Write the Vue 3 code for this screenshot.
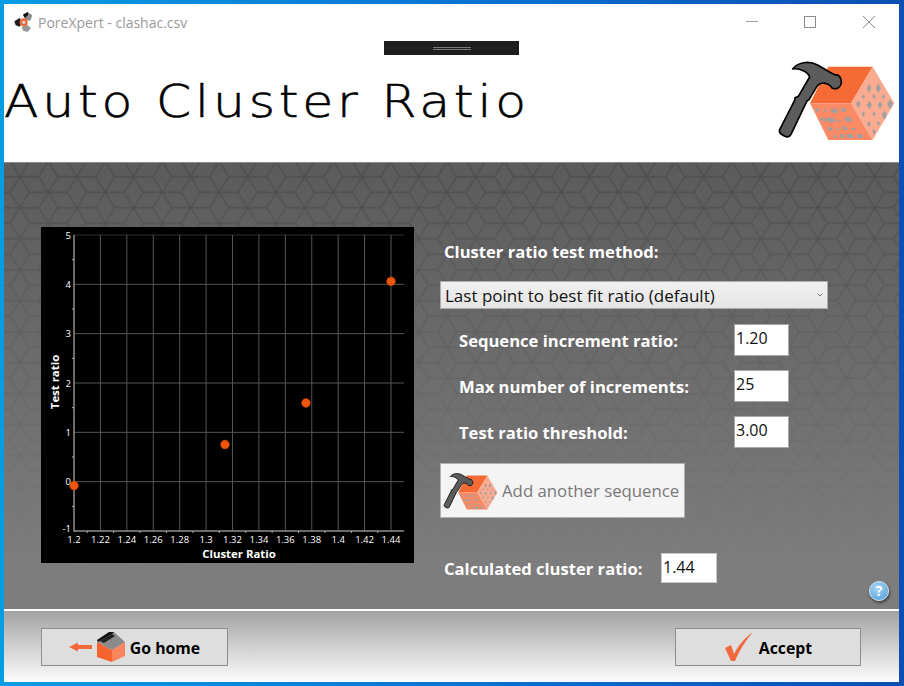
<script setup>
const PLOT = { left: 33, right: 350, top: 8, bottom: 304 }

const xTicks = [1.2, 1.22, 1.24, 1.26, 1.28, 1.3, 1.32, 1.34, 1.36, 1.38, 1.4, 1.42, 1.44]
const yTicks = [5, 4, 3, 2, 1, 0, -1]
const points = [
  { x: 1.2, y: -0.08 },
  { x: 1.3143, y: 0.753 },
  { x: 1.3756, y: 1.595 },
  { x: 1.44, y: 4.06 },
]

function sx(v) {
  return PLOT.left + ((v - 1.2) / 0.24) * (PLOT.right - PLOT.left)
}
function sy(v) {
  return PLOT.bottom - ((v + 1) / 6) * (PLOT.bottom - PLOT.top)
}

const rows = [
  { label: 'Sequence increment ratio:', value: '1.20' },
  { label: 'Max number of increments:', value: '25' },
  { label: 'Test ratio threshold:', value: '3.00' },
]

// holes on the cube faces, in logo coordinates
const sideHoles = [
  [282, 100, 7, 13], [310, 100, 8, 15], [265, 125, 5, 7], [297, 125, 5, 8], [325, 125, 5, 8],
  [250, 147, 7, 11], [283, 150, 8, 13], [315, 150, 7, 11], [345, 147, 9, 15],
  [265, 177, 5, 9], [297, 177, 5, 8], [328, 180, 8, 14], [282, 207, 6, 10], [310, 205, 5, 7], [297, 230, 5, 9],
]
const faceHoles = [
  [127, 165, 8, 4], [150, 167, 6, 3], [178, 167, 12, 6], [205, 165, 9, 5],
  [145, 193, 10, 5], [168, 195, 13, 7], [192, 197, 6, 3], [220, 193, 12, 7],
  [165, 222, 8, 5], [187, 223, 5, 3], [210, 220, 9, 5], [236, 222, 6, 3],
  [180, 245, 6, 4], [202, 243, 8, 5], [226, 243, 12, 6], [255, 243, 10, 6],
]

function diamond([x, y, w, h]) {
  return `${x - w},${y} ${x},${y - h} ${x + w},${y} ${x},${y + h}`
}
function slanted([x, y, w, h]) {
  return `${x - w},${y - h} ${x + w * 0.6},${y - h} ${x + w},${y + h} ${x - w * 0.6},${y + h}`
}
</script>

<template>
  <div class="frame">
    <svg class="defs" width="0" height="0">
      <symbol id="brand" viewBox="0 0 375 270">
        <polygon points="160,35 293,35 228,145 105,145" fill="#f56a35" />
        <polygon points="293,35 358,145 293,255 228,145" fill="#fbab90" />
        <polygon points="105,145 228,145 293,255 160,255" fill="#fa8a66" />
        <polygon v-for="(h, i) in sideHoles" :key="'s' + i" :points="diamond(h)" fill="#a19f9f" />
        <polygon v-for="(h, i) in faceHoles" :key="'f' + i" :points="slanted(h)" fill="#a19f9f" />
        <path
          d="M53 42 C68 22 100 16 128 30 C146 40 162 52 182 60 C192 58 200 70 199 84 C197 98 184 104 172 100 C168 92 158 86 146 84 C136 84 130 88 126 94 L102 134 L96 138 L48 238 C44 246 36 247 28 243 L18 237 C12 232 12 226 16 220 L60 134 L60 128 L70 124 L104 66 C100 52 74 38 53 42 Z"
          fill="#5c5c5c" stroke="#000" stroke-width="5" stroke-linejoin="round"
        />
      </symbol>
    </svg>

    <div class="window">
      <header class="head">
        <div class="titlebar">
          <svg class="app-icon" width="20" height="20" viewBox="0 0 60 60">
            <polygon points="4,28 20,18 28,30 20,44 8,40" fill="#1c1c1c" />
            <polygon points="30,8 44,0 58,10 52,26 38,24" fill="#8e8e8e" />
            <polygon points="30,8 44,0 46,8 36,18" fill="#111" />
            <polygon points="26,44 42,38 54,48 44,60 30,56" fill="#9a9a9a" />
            <circle cx="32" cy="31" r="12" fill="#f0683a" />
            <circle cx="32" cy="31" r="5" fill="#cfd8dc" />
          </svg>
          <span class="app-title">PoreXpert - clashac.csv</span>
          <div class="win-btns">
            <div class="win-btn">
              <svg width="14" height="14" viewBox="0 0 14 14"><path d="M1 6.5H13" stroke="#9a9a9a" fill="none" /></svg>
            </div>
            <div class="win-btn">
              <svg width="14" height="14" viewBox="0 0 14 14"><rect x="1.5" y="1.5" width="11" height="11" stroke="#8c8c8c" fill="none" /></svg>
            </div>
            <div class="win-btn">
              <svg width="14" height="14" viewBox="0 0 14 14"><path d="M1 1L13 13M13 1L1 13" stroke="#8c8c8c" fill="none" /></svg>
            </div>
          </div>
        </div>
        <div class="grip-row"><div class="grip"><span></span></div></div>
        <div class="title-row">
          <h1 class="page-title">Auto Cluster Ratio</h1>
          <svg class="brand-logo" width="125" height="90"><use href="#brand" /></svg>
        </div>
      </header>

      <main class="content">
        <svg class="hex-bg" width="100%" height="100%">
          <defs>
            <pattern id="hexes" x="15.7" y="13.7" width="57" height="31" patternUnits="userSpaceOnUse">
              <path
                d="M0 0H19M38 0H57M0 31H19M38 31H57M9.5 15.5H47.5M0 0L9.5 15.5L0 31M57 0L47.5 15.5L57 31M19 0L28.5 15.5L19 31M38 0L28.5 15.5L38 31"
                stroke="#4b4b4b" stroke-width="1.3" fill="none"
              />
            </pattern>
            <linearGradient id="fade" x1="0" y1="0" x2="0" y2="1">
              <stop offset="0" stop-color="#808080" stop-opacity="0" />
              <stop offset="0.9" stop-color="#808080" stop-opacity="0.92" />
            </linearGradient>
          </defs>
          <rect width="100%" height="100%" fill="#5b5b5b" />
          <rect width="100%" height="100%" fill="url(#hexes)" />
          <rect width="100%" height="100%" fill="url(#fade)" />
        </svg>

        <svg class="chart" width="373" height="336" viewBox="0 0 373 336">
          <rect width="373" height="336" fill="#000" />
          <line v-for="t in yTicks" :key="'gy' + t" :x1="PLOT.left" :x2="PLOT.right + 13" :y1="sy(t)" :y2="sy(t)" :stroke="t === 5 ? '#2e2e2e' : '#555'" />
          <line v-for="t in xTicks" :key="'gx' + t" :x1="sx(t)" :x2="sx(t)" :y1="PLOT.top" :y2="PLOT.bottom" stroke="#555" />
          <line :x1="PLOT.left" :x2="PLOT.left" :y1="PLOT.top" :y2="PLOT.bottom + 1" stroke="#aaa" />
          <line :x1="PLOT.left" :x2="PLOT.right + 13" :y1="PLOT.bottom" :y2="PLOT.bottom" stroke="#aaa" />
          <line v-for="t in yTicks.slice(0, 6)" :key="'my' + t" :x1="PLOT.left - 2" :x2="PLOT.left" :y1="sy(t - 0.5)" :y2="sy(t - 0.5)" stroke="#aaa" />
          <line v-for="t in xTicks.slice(0, 12)" :key="'mx' + t" :x1="sx(t + 0.01)" :x2="sx(t + 0.01)" :y1="PLOT.bottom" :y2="PLOT.bottom + 2" stroke="#aaa" />
          <text v-for="t in yTicks" :key="'ly' + t" class="tick" :x="PLOT.left - 3" :y="sy(t) + (t === -1 ? 1 : 3.5)" text-anchor="end">{{ t }}</text>
          <text v-for="t in xTicks" :key="'lx' + t" class="tick" :x="sx(t)" y="316" text-anchor="middle">{{ parseFloat(t.toFixed(2)) }}</text>
          <text class="axis-label" x="198" y="331" text-anchor="middle">Cluster Ratio</text>
          <text class="axis-label" x="18" y="155" text-anchor="middle" transform="rotate(-90 18 155)">Test ratio</text>
          <circle v-for="(p, i) in points" :key="i" :cx="sx(p.x)" :cy="sy(p.y)" r="4.4" fill="#f25408" stroke="#a8400f" stroke-width="0.6" />
        </svg>

        <section class="controls">
          <div class="label method-label">Cluster ratio test method:</div>
          <div class="select">
            <span>Last point to best fit ratio (default)</span>
            <svg width="6" height="4" viewBox="0 0 6 4"><path d="M0.5 0.5L3 3L5.5 0.5" stroke="#777" fill="none" /></svg>
          </div>
          <div v-for="row in rows" :key="row.label" class="param-row">
            <div class="label param-label">{{ row.label }}</div>
            <div class="field">{{ row.value }}</div>
          </div>
          <button class="add-btn" type="button">
            <svg width="58" height="42"><use href="#brand" /></svg>
            <span>Add another sequence</span>
          </button>
          <div class="result-row">
            <div class="label result-label">Calculated cluster ratio:</div>
            <div class="field result-field">1.44</div>
          </div>
        </section>

        <div class="help">?</div>
      </main>

      <footer class="foot">
        <button class="foot-btn" type="button">
          <svg width="23" height="10" viewBox="0 0 23 10"><path d="M0 5L9 0.5V3H23V7H9V9.5Z" fill="#f4673a" /></svg>
          <svg class="home-icon" width="28" height="30" viewBox="0 0 28 30">
            <polygon points="0,10 15,18 15,30 0,25" fill="#f5642f" />
            <polygon points="15,18 28,10 28,24 15,30" fill="#fa855c" />
            <polygon points="0,10 17,0 28,10 15,18" fill="#8b8b8b" />
            <polygon points="1,10 15,2 17,0 12,0 0,8" fill="#111" />
            <polygon points="3,9 15,2 18,4 7,11" fill="#222" />
          </svg>
          <span class="foot-text">Go home</span>
        </button>
        <button class="foot-btn accept-btn" type="button">
          <svg width="30" height="30" viewBox="0 0 30 30">
            <path d="M1 16L7 13L10 22C15 12 22 5 29 0C21 9 15 19 11 29H7Z" fill="#f0693c" />
          </svg>
          <span class="foot-text">Accept</span>
        </button>
      </footer>
    </div>
  </div>
</template>

<style>
html,
body {
  margin: 0;
  overflow: hidden;
}
</style>

<style scoped>
.frame {
  width: 904px;
  height: 686px;
  box-sizing: border-box;
  padding: 4px 5px 4px 4px;
  background: linear-gradient(90deg, #0a9ce2, #0a78d6 45%, #0c4fb2);
  font-family: "Open Sans", "Noto Sans", sans-serif;
}

.defs {
  position: absolute;
}

.window {
  height: 100%;
  display: flex;
  flex-direction: column;
  background: #fff;
}

.head {
  height: 159px;
  box-sizing: border-box;
  border-bottom: 1px solid #8a8a8a;
  background: #fff;
  flex: none;
}

.titlebar {
  height: 36px;
  display: flex;
  align-items: center;
  padding: 0 1px 0 9px;
}

.app-icon {
  flex: none;
}

.app-title {
  margin-left: 5px;
  font-size: 14px;
  color: #9a9a9a;
}

.win-btns {
  margin-left: auto;
  display: flex;
}

.win-btn {
  width: 58.5px;
  height: 36px;
  display: flex;
  align-items: center;
  justify-content: center;
}

.grip-row {
  margin-top: 1px;
  display: flex;
  justify-content: center;
}

.grip {
  width: 135px;
  height: 14px;
  background: #1e1e1e;
  display: flex;
  align-items: center;
  justify-content: center;
}

.grip span {
  width: 38px;
  height: 3px;
  border-top: 1px solid #777;
  border-bottom: 1px solid #777;
  box-sizing: border-box;
}

.title-row {
  display: flex;
  justify-content: space-between;
  align-items: flex-start;
}

.page-title {
  margin: 18px 0 0 0;
  font-family: "DejaVu Sans", sans-serif;
  font-weight: 200;
  font-size: 45px;
  line-height: 58px;
  letter-spacing: 3.4px;
  color: #000;
  white-space: nowrap;
  transform: scaleX(1.12);
  transform-origin: left center;
  -webkit-text-stroke: 0.6px #000;
}

.brand-logo {
  flex: none;
  margin-right: -1px;
}

.content {
  position: relative;
  flex: 1;
  display: flex;
  align-items: flex-start;
  overflow: hidden;
}

.hex-bg {
  position: absolute;
  inset: 0;
}

.chart {
  position: relative;
  flex: none;
  margin: 64px 0 0 37px;
}

.tick {
  font-family: "Open Sans", sans-serif;
  font-size: 9.5px;
  fill: #fff;
}

.axis-label {
  font-family: "Open Sans", sans-serif;
  font-size: 11.4px;
  font-weight: 700;
  fill: #fff;
}

.controls {
  position: relative;
  margin: 77px 0 0 26px;
  width: 388px;
}

.label {
  font-size: 16.6px;
  font-weight: 700;
  color: #fff;
  white-space: nowrap;
}

.method-label {
  height: 24px;
  line-height: 24px;
  padding-left: 4px;
}

.select {
  margin-top: 17px;
  height: 28px;
  box-sizing: border-box;
  border: 1px solid #acacac;
  background: linear-gradient(#f0f0f0, #e5e5e5);
  padding: 0 4px;
  display: flex;
  align-items: center;
  justify-content: space-between;
  font-size: 17px;
  color: #111;
}

.param-row {
  height: 32px;
  margin-top: 14px;
  display: flex;
  align-items: center;
}

.select + .param-row {
  margin-top: 15px;
}

.param-label {
  width: 294px;
  padding-left: 19px;
  box-sizing: border-box;
}

.field {
  width: 55px;
  height: 32px;
  box-sizing: border-box;
  border: 1px solid #a8a8a8;
  background: #fff;
  padding-left: 1px;
  font-size: 16px;
  line-height: 26px;
  color: #111;
}

.add-btn {
  margin-top: 15px;
  width: 245px;
  height: 55px;
  box-sizing: border-box;
  border: 1px solid #b0b0b0;
  background: #f4f4f4;
  padding: 0 0 0 1px;
  display: flex;
  align-items: center;
  gap: 2px;
  font-family: inherit;
  font-size: 16.8px;
  color: #787878;
  white-space: nowrap;
}

.result-row {
  margin-top: 35px;
  display: flex;
  align-items: center;
}

.result-label {
  width: 221px;
  padding-left: 4px;
  box-sizing: border-box;
}

.result-field {
  width: 56px;
  height: 30px;
  border-color: #c8c8c8;
}

.help {
  position: absolute;
  left: 865px;
  top: 418px;
  width: 18px;
  height: 18px;
  border-radius: 50%;
  background: radial-gradient(circle at 40% 30%, #a7d6f3, #4a9cdc);
  border: 1px solid #cfe6f6;
  box-shadow: 1px 2px 3px rgba(0, 0, 0, 0.5);
  color: #fff;
  font-size: 14px;
  font-weight: 700;
  line-height: 18px;
  text-align: center;
}

.foot {
  height: 73px;
  box-sizing: border-box;
  flex: none;
  border-top: 2px solid #fff;
  background: linear-gradient(#a2a2a2, #fdfdfd);
  padding: 17px 38px 0 37px;
  display: flex;
  justify-content: space-between;
  align-items: flex-start;
}

.foot-btn {
  width: 187px;
  height: 38px;
  box-sizing: border-box;
  border: 1px solid #8e8e8e;
  background: #dedede;
  padding: 0;
  display: flex;
  align-items: center;
  justify-content: center;
  gap: 5px;
  font-family: inherit;
  font-size: 15.8px;
  font-weight: 700;
  color: #000;
}

.accept-btn {
  width: 186px;
}

.foot-text {
  padding-top: 2px;
}
</style>
